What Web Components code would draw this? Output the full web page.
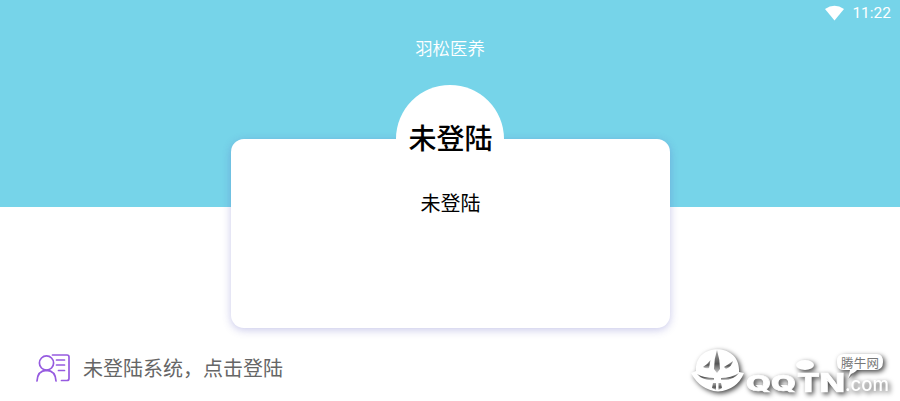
<!DOCTYPE html>
<html lang="zh-CN">
<head>
<meta charset="utf-8">
<title>羽松医养</title>
<style>
body{margin:0;background:#fff;font-family:"Noto Sans CJK SC",sans-serif;overflow:hidden}
</style>
</head>
<body>
<app-page>
  <app-header slot="header" time="11:22">羽松医养</app-header>
  <profile-card slot="card" name="未登陆">未登陆</profile-card>
  <login-row slot="footer">未登陆系统，点击登陆</login-row>
  <site-mark slot="footer"></site-mark>
</app-page>
<script>
const define = (tag, html) => customElements.define(tag, class extends HTMLElement {
  constructor() {
    super();
    this.attachShadow({mode: 'open'}).innerHTML = html;
  }
  connectedCallback() {
    this.shadowRoot.querySelectorAll('[data-attr]').forEach(e => {
      e.textContent = this.getAttribute(e.dataset.attr);
    });
  }
});

define('app-page', `
<style>
:host{display:flex;flex-direction:column;width:900px;height:401px;overflow:hidden;background:#fff}
.card{display:flex;justify-content:center;margin-top:-68px}
footer{display:flex;justify-content:space-between;height:73px}
</style>
<slot name="header"></slot>
<div class="card"><slot name="card"></slot></div>
<footer><slot name="footer"></slot></footer>`);

define('app-header', `
<style>
:host{display:block;height:207px;background:#76d4e9;color:#fff}
.status{display:flex;justify-content:flex-end;align-items:center;height:27px;padding-right:9px;gap:8px;font:15.500px/27px Roboto,sans-serif}
svg{display:block;margin-top:-1px}
.title{font-size:17.4px;line-height:26px;text-align:center;padding-top:8px;font-weight:350}
</style>
<div class="status"><svg width="19" height="16" viewBox="0 0 19 16"><path d="M0 4Q9.500-2.500 19 4L9.500 15.500Z" fill="#fff"/></svg><span data-attr="time"></span></div>
<div class="title"><slot></slot></div>`);

define('profile-card', `
<style>
:host{display:flex;flex-direction:column;align-items:center;width:439px;height:189px;border-radius:13px;background:#fff;box-shadow:0 2px 8px rgba(87,87,190,.32);color:#000}
.avatar{display:flex;flex:none;align-items:center;justify-content:center;width:108px;height:108px;margin-top:-54px;border-radius:50%;background:#fff;font-size:28px;line-height:40px;font-weight:500;padding:0 0 4px 1px;box-sizing:border-box;white-space:nowrap}
.name{font-size:20px;line-height:30px;margin-top:-5px;padding-left:1px}
</style>
<div class="avatar" data-attr="name"></div>
<div class="name"><slot></slot></div>`);

define('login-row', `
<style>
:host{display:flex;align-items:center;gap:13px;height:40px;padding:20px 0 0 36px;color:#666;font-size:20px;line-height:30px}
svg{display:block;flex:none}
</style>
<svg width="34" height="28" viewBox="0 0 34 28" fill="none" stroke="#965be0" stroke-width="1.700" stroke-linecap="round"><circle cx="10.500" cy="9" r="7.100"/><path d="M1 27C1.300 20.500 4 16.500 10.500 16.300C17 16.500 19.700 20.500 20 27M16.500 1H31Q33 1 33 3V24.500Q33 26.500 31 26.500H25.500M20.500 6H28.500M20.500 11H28.500M22.500 16.500H28.500"/></svg>
<span><slot></slot></span>`);

define('site-mark', `
<style>
:host{display:block;width:220px;height:61px;margin-top:12px}
svg{display:block}
.mark{filter:drop-shadow(2px 2.500px 2.500px rgba(0,0,0,.72))}
.cuts{filter:blur(.6px)}
</style>
<svg width="220" height="61" viewBox="0 0 220 61">
<defs><linearGradient id="g" x1="0" y1="0" x2="0" y2="1"><stop offset="0" stop-color="#aaa"/><stop offset=".6" stop-color="#555"/><stop offset="1" stop-color="#ccc"/></linearGradient></defs>
<g class="mark" fill="#fff">
<path d="M16 31C14 2 61 2 59 32L64 33Q57 50 38 51.500Q20 50 11 33Z"/>
<ellipse cx="125" cy="25" rx="9" ry="5"/>
<path d="M157 20.500Q157 14 164 14H197Q203 14 203 22Q203 30 195 30H177L168 39L170 30H163Q157 30 157 23Z"/>
<g font-family="Inter,sans-serif" font-weight="800" stroke="#fff" stroke-width=".7">
<text><tspan x="66" y="50.500" font-size="21" textLength="50" lengthAdjust="spacingAndGlyphs">QQ</tspan><tspan x="117" y="51.500" font-size="25.500" textLength="48" lengthAdjust="spacingAndGlyphs">TN</tspan></text>
</g>
<text x="165" y="51" font-family="Inter,sans-serif" font-weight="500" font-size="19" textLength="44" lengthAdjust="spacingAndGlyphs">.com</text>
</g>
<g class="cuts" fill="url(#g)">
<path d="M37 10Q40 20 40 29L37 33L34 29Q34 19 37 10Z"/>
<path d="M30.500 20L29 28Q26 29 23 27Q27 25 30.500 20Z"/>
<path d="M44 27Q49 24 53 21Q52 26 46 29Z"/>
<path d="M17 34Q24 38 34 38V40Q23 41 17 34ZM41 38Q51 38 59 33Q53 41 41 40Z"/>
<path d="M33 43H36V50L32 48ZM38.500 43H41L42 48L38.500 50Z"/>
</g>
<path d="M177 31L168 39L171 34Z" fill="#777"/>
<text x="161" y="28" font-family="Noto Sans CJK SC,sans-serif" font-size="12.500" fill="#777" textLength="38">腾牛网</text>
</svg>`);
</script>
</body>
</html>
